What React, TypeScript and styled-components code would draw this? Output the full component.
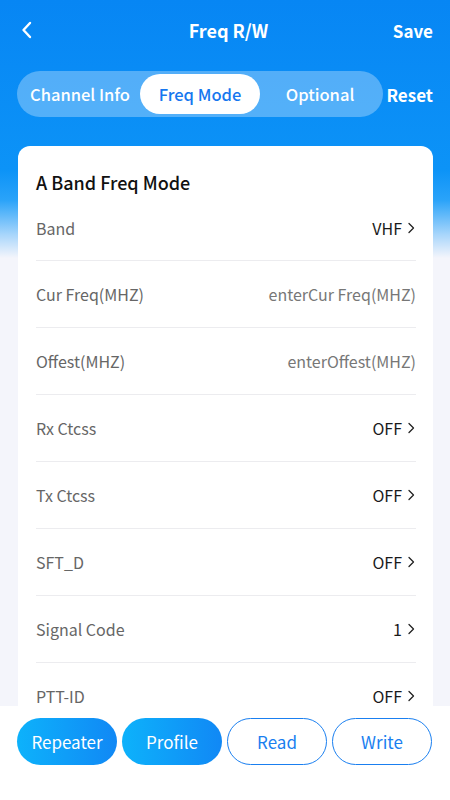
import React, { useState } from 'react'
import styled, { createGlobalStyle } from 'styled-components'

const GlobalStyle = createGlobalStyle`
  html, body {
    margin: 0;
    padding: 0;
    width: 450px;
    height: 800px;
    overflow: hidden;
    font-family: 'Noto Sans CJK SC', 'Noto Sans', sans-serif;
    background: #f4f5fb;
  }
  * {
    box-sizing: border-box;
  }
`

type TabProps = {
  active: boolean
}

type BtnProps = {
  filled: boolean
}

const Page = styled.div`
  display: flex;
  flex-direction: column;
  width: 450px;
  height: 800px;
  background: linear-gradient(
    180deg,
    #0786f4 0px,
    #0c93f7 170px,
    #2aa3f9 200px,
    #a9d6fb 235px,
    #f4f5fb 258px
  );
`

const Content = styled.div`
  flex: 1;
  overflow: hidden;
  display: flex;
  flex-direction: column;
  & > * {
    flex-shrink: 0;
  }
`

const Header = styled.div`
  display: grid;
  grid-template-columns: 1fr auto 1fr;
  align-items: center;
  height: 60px;
  padding: 0 17px 0 20px;
  color: #fff;
`

const BackBtn = styled.div`
  display: flex;
  align-items: center;
  justify-self: start;
`

const Title = styled.div`
  font-size: 18px;
  font-weight: 700;
  padding-left: 4px;
`

const HeadAction = styled.div`
  justify-self: end;
  font-size: 17px;
  font-weight: 700;
`

const TabRow = styled.div`
  display: flex;
  align-items: center;
  justify-content: space-between;
  padding: 11px 17px 0 17px;
`

const Segmented = styled.div`
  display: flex;
  align-items: center;
  width: 366px;
  height: 46px;
  padding: 3px;
  border-radius: 23px;
  background: rgba(255, 255, 255, 0.3);
`

const Tab = styled.div<TabProps>`
  flex: 1;
  height: 40px;
  display: flex;
  align-items: center;
  justify-content: center;
  border-radius: 20px;
  font-size: 16.5px;
  font-weight: 500;
  color: ${(props) => (props.active ? '#1677ef' : '#fff')};
  background: ${(props) => (props.active ? '#fff' : 'transparent')};
`

const ResetBtn = styled.div`
  color: #fff;
  font-size: 17px;
  font-weight: 700;
`

const Card = styled.div`
  margin: 29px 17px 0 18px;
  background: #fff;
  border-radius: 12px;
  padding: 20px 17px 0 18px;
`

const CardTitle = styled.div`
  font-size: 18px;
  font-weight: 500;
  color: #111;
  line-height: 32px;
`

const Row = styled.div`
  display: flex;
  align-items: center;
  justify-content: space-between;
  height: 67px;
  border-bottom: 1.5px solid #ececef;
  ${CardTitle} + & {
    height: 63px;
    padding-bottom: 3px;
  }
`

const Label = styled.span`
  font-size: 16px;
  color: #666;
`

const Value = styled.span<{ placeholder?: boolean }>`
  display: flex;
  align-items: center;
  gap: 4px;
  font-size: 16px;
  color: ${(props) => (props.placeholder ? '#777' : '#1a1a1a')};
`

const Chevron = styled.svg`
  width: 10px;
  height: 14px;
`

const BottomBar = styled.div`
  height: 94px;
  flex-shrink: 0;
  background: #fff;
  display: flex;
  gap: 5px;
  padding: 12px 17px 0 17px;
`

const ActionBtn = styled.div<BtnProps>`
  width: 100px;
  height: 47px;
  border-radius: 24px;
  display: flex;
  align-items: center;
  justify-content: center;
  font-size: 17px;
  color: ${(props) => (props.filled ? '#fff' : '#1a7ff0')};
  background: ${(props) =>
    props.filled ? 'linear-gradient(90deg, #0db2fb, #1188f5)' : '#fff'};
  border: ${(props) => (props.filled ? 'none' : '1.5px solid #1a7ff0')};
`

const rows = [
  { label: 'Band', value: 'VHF', arrow: true },
  { label: 'Cur Freq(MHZ)', value: 'enterCur Freq(MHZ)', placeholder: true },
  { label: 'Offest(MHZ)', value: 'enterOffest(MHZ)', placeholder: true },
  { label: 'Rx Ctcss', value: 'OFF', arrow: true },
  { label: 'Tx Ctcss', value: 'OFF', arrow: true },
  { label: 'SFT_D', value: 'OFF', arrow: true },
  { label: 'Signal Code', value: '1', arrow: true },
  { label: 'PTT-ID', value: 'OFF', arrow: true }
]

function App() {
  const [tab, setTab] = useState('Freq Mode')

  return (
    <>
      <GlobalStyle />
      <Page>
        <Content>
          <Header>
            <BackBtn>
              <svg width="14" height="20" viewBox="0 0 14 20">
                <path
                  d="M10 3 L3.5 10 L10 17"
                  fill="none"
                  stroke="#fff"
                  strokeWidth="2.4"
                  strokeLinecap="round"
                  strokeLinejoin="round"
                />
              </svg>
            </BackBtn>
            <Title>Freq R/W</Title>
            <HeadAction>Save</HeadAction>
          </Header>
          <TabRow>
            <Segmented>
              {['Channel Info', 'Freq Mode', 'Optional'].map((t) => (
                <Tab key={t} active={tab === t} onClick={() => setTab(t)}>
                  {t}
                </Tab>
              ))}
            </Segmented>
            <ResetBtn>Reset</ResetBtn>
          </TabRow>
          <Card>
            <CardTitle>A Band Freq Mode</CardTitle>
            {rows.map((r) => (
              <Row key={r.label}>
                <Label>{r.label}</Label>
                <Value placeholder={r.placeholder}>
                  {r.value}
                  {r.arrow && (
                    <Chevron viewBox="0 0 10 14">
                      <path
                        d="M3 2.5 L7.5 7 L3 11.5"
                        fill="none"
                        stroke="#222"
                        strokeWidth="1.3"
                        strokeLinecap="round"
                        strokeLinejoin="round"
                      />
                    </Chevron>
                  )}
                </Value>
              </Row>
            ))}
          </Card>
        </Content>
        <BottomBar>
          <ActionBtn filled>Repeater</ActionBtn>
          <ActionBtn filled>Profile</ActionBtn>
          <ActionBtn filled={false}>Read</ActionBtn>
          <ActionBtn filled={false}>Write</ActionBtn>
        </BottomBar>
      </Page>
    </>
  )
}

export default App
